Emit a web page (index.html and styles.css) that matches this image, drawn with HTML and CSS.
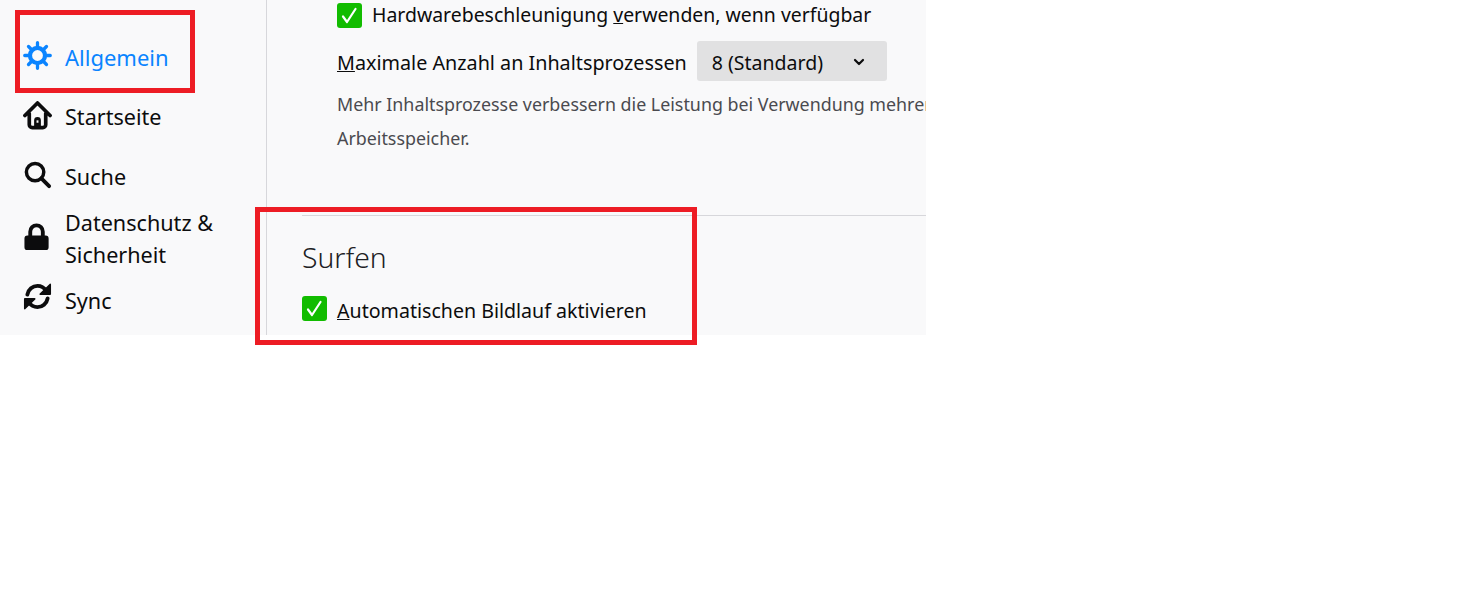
FILE: index.html
```html
<!DOCTYPE html>
<html lang="de">
<head>
<meta charset="utf-8">
<title>Einstellungen</title>
<link rel="stylesheet" href="styles.css">
</head>
<body>
<div class="window">
  <nav class="sidebar">
    <div class="nav-item active">
      <svg class="nav-icon" viewBox="0 0 30 30"><g fill="none" stroke="currentColor" stroke-linecap="round"><circle cx="15" cy="15" r="7.800" stroke-width="4.400"/><path stroke-width="3.400" d="M15 1.800v4M15 24.200v4M1.800 15h4M24.200 15h4M5.700 5.700l2.800 2.800M21.500 21.500l2.800 2.800M5.700 24.300l2.800-2.800M21.500 8.500l2.800-2.800"/></g></svg>
      <span class="nav-wide">Allgemein</span>
    </div>
    <div class="nav-item">
      <svg class="nav-icon" viewBox="0 0 30 30"><path fill="none" stroke="currentColor" stroke-width="3.800" stroke-linecap="round" stroke-linejoin="round" d="M2 15L15 2l13 13M6.500 13v11.500a3 3 0 0 0 3 3h11a3 3 0 0 0 3-3V13"/><path fill="currentColor" d="M11.500 28v-8a3.500 3.500 0 0 1 7 0v8z"/><rect x="14" y="20" width="2" height="2.500" fill="#f9f9fa"/></svg>
      <span>Startseite</span>
    </div>
    <div class="nav-item">
      <svg class="nav-icon" viewBox="0 0 30 30"><g fill="none" stroke="currentColor" stroke-linecap="round"><circle cx="12.500" cy="11.500" r="9" stroke-width="3.600"/><path stroke-width="4" d="M19 18l8 8"/></g></svg>
      <span>Suche</span>
    </div>
    <div class="nav-item tall">
      <svg class="nav-icon icon-lock" viewBox="0 0 30 30"><path fill="currentColor" d="M4.500 29a3 3 0 0 1-3-3v-9a3 3 0 0 1 3-3h1v-4a8.500 8.500 0 0 1 17 0v4h1a3 3 0 0 1 3 3v9a3 3 0 0 1-3 3zM9.500 14h9v-4a4.500 4.500 0 0 0-9 0z"/></svg>
      <span>Datenschutz &amp;<br>Sicherheit</span>
    </div>
    <div class="nav-item">
      <svg class="nav-icon icon-sync" viewBox="0 0 30 30"><path fill="none" stroke="currentColor" stroke-width="4" stroke-linecap="round" d="M4.500 13C5.500 7.500 10 4 15 4c4 0 7 2 9 5M25.500 17C24.500 22.500 20 26 15 26c-4 0-7-2-9-5"/><path fill="currentColor" d="M28 1.500a1 1 0 0 1 1 1v10a1 1 0 0 1-1 1H18a1 1 0 0 1-.7-1.700zM2 28.500a1 1 0 0 1-1-1v-10a1 1 0 0 1 1-1h10a1 1 0 0 1 .7 1.700z"/></svg>
      <span>Sync</span>
    </div>
  </nav>
  <main class="content">
    <div class="row indent row-hardware">
      <span class="checkbox"><svg viewBox="0 0 25 25"><path fill="none" stroke="#fff" stroke-width="2.200" stroke-linecap="round" stroke-linejoin="round" d="M6 13.500l4 5.500 8.500-13"/></svg></span>
      <span class="label-up">Hardwarebeschleunigung <u>v</u>erwenden, wenn verfügbar</span>
    </div>
    <div class="row indent row-select">
      <span class="label-down"><u>M</u>aximale Anzahl an Inhaltsprozessen</span>
      <span class="select">
        <span>8 (Standard)</span>
        <svg class="chevron" viewBox="0 0 12 8"><path fill="none" stroke="currentColor" stroke-width="2.200" stroke-linecap="round" stroke-linejoin="round" d="M2 2l4 4 4-4"/></svg>
      </span>
    </div>
    <p class="note">Mehr Inhaltsprozesse verbessern die Leistung bei Verwendung mehrerer Tabs, beanspruchen aber auch mehr Arbeitsspeicher.</p>
    <hr class="divider">
    <h2 class="heading">Surfen</h2>
    <div class="row row-scroll">
      <span class="checkbox"><svg viewBox="0 0 25 25"><path fill="none" stroke="#fff" stroke-width="2.200" stroke-linecap="round" stroke-linejoin="round" d="M6 13.500l4 5.500 8.500-13"/></svg></span>
      <span class="label-scroll"><u>A</u>utomatischen Bildlauf aktivieren</span>
    </div>
  </main>
</div>
<div class="callout callout-nav"></div>
<div class="callout callout-section"></div>
</body>
</html>
```

FILE: styles.css
```css
* { box-sizing: border-box; }
html, body { margin: 0; padding: 0; background: #fff; }
body {
  position: relative;
  height: 613px;
  overflow: hidden;
  font-family: "Noto Sans", "Open Sans", sans-serif;
  font-size: 19.6px;
  color: #0c0c0d;
}
.window {
  display: flex;
  width: 926px;
  height: 335px;
  background: #f9f9fa;
  overflow: hidden;
}
.sidebar {
  flex: none;
  width: 267px;
  padding: 27px 0 0 23px;
  border-right: 1px solid #d7d7db;
  font-size: 21.6px;
}
.nav-item {
  display: flex;
  align-items: center;
  gap: 13px;
  height: 60px;
  line-height: 32px;
}
.nav-item.tall { height: 64px; }
.nav-item.active { color: #0a84ff; }
.nav-wide { font-size: 22px; }
.nav-icon { flex: none; width: 29px; height: 29px; margin-bottom: 3px; }
.nav-icon.icon-lock { margin-bottom: 6px; }
.nav-icon.icon-sync { margin-bottom: 9px; }
.content {
  flex: 1;
  min-width: 0;
  padding-left: 35px;
}
.row {
  display: flex;
  align-items: center;
  gap: 10px;
  height: 30px;
}
.indent { padding-left: 35px; white-space: nowrap; }
.row-hardware { font-size: 19.45px; }
.row-select { margin-top: 11px; height: 40px; font-size: 19.75px; }
.row-scroll { margin-top: 18px; }
.label-up { padding-bottom: 2px; }
.label-down { padding-top: 2px; }
.label-scroll { padding-top: 4px; }
.checkbox {
  flex: none;
  display: block;
  width: 25px;
  height: 25px;
  border-radius: 3px;
  background: #12bc00;
}
.checkbox svg { display: block; width: 25px; height: 25px; }
.select {
  display: flex;
  align-items: center;
  justify-content: space-between;
  width: 190px;
  height: 40px;
  padding: 2px 22px 0 15px;
  background: #e1e1e2;
  border-radius: 3px;
  font-size: 19.5px;
}
.chevron { width: 12px; height: 8px; }
.note {
  margin: 6px 0 0 35px;
  width: 960px;
  line-height: 34px;
  font-size: 17.85px;
  color: #4a4a4f;
}
.divider {
  margin: 60px 0 0;
  height: 1px;
  border: 0;
  background: #d7d7db;
}
.heading {
  margin: 23px 0 0;
  font-size: 28.3px;
  font-weight: 300;
  line-height: 36px;
  color: #202023;
}
.callout {
  position: absolute;
  border: 5px solid #ed1c24;
}
.callout-nav { left: 15px; top: 10px; width: 180px; height: 83px; }
.callout-section { left: 255px; top: 207px; width: 442px; height: 138px; }
```
